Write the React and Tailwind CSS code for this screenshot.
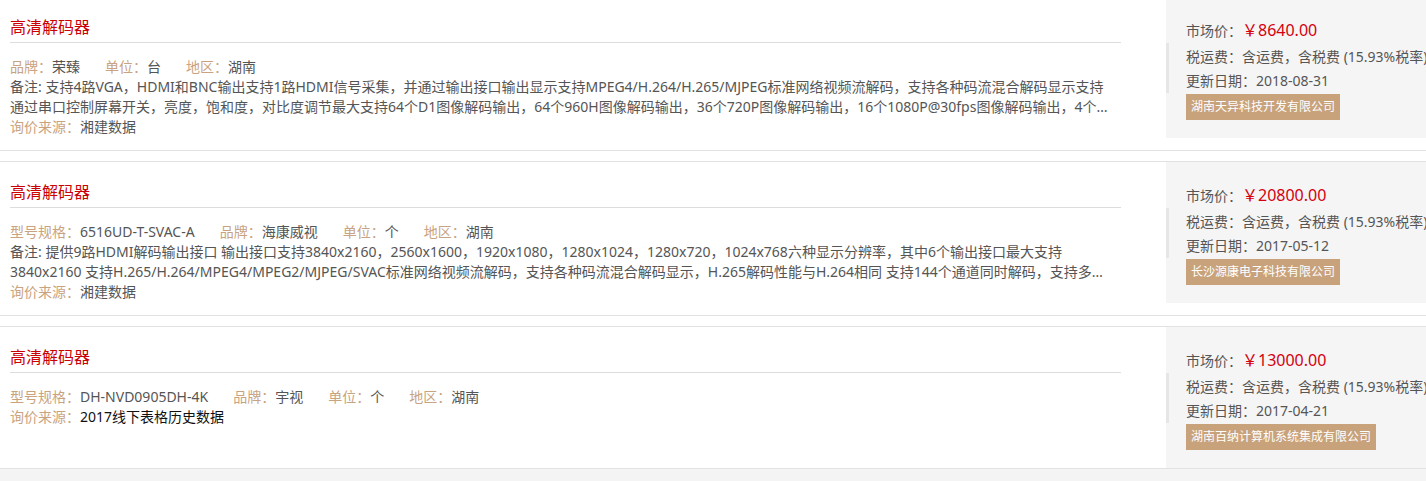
const items = [
  {
    title: "高清解码器",
    fields: [
      ["品牌", "荣臻"],
      ["单位", "台"],
      ["地区", "湖南"],
    ],
    note: "备注: 支持4路VGA，HDMI和BNC输出支持1路HDMI信号采集，并通过输出接口输出显示支持MPEG4/H.264/H.265/MJPEG标准网络视频流解码，支持各种码流混合解码显示支持通过串口控制屏幕开关，亮度，饱和度，对比度调节最大支持64个D1图像解码输出，64个960H图像解码输出，36个720P图像解码输出，16个1080P@30fps图像解码输出，4个4K图像解码输出，支持多画面分割显示",
    source: "湘建数据",
    price: "8640.00",
    date: "2018-08-31",
    company: "湖南天异科技开发有限公司",
  },
  {
    title: "高清解码器",
    fields: [
      ["型号规格", "6516UD-T-SVAC-A"],
      ["品牌", "海康威视"],
      ["单位", "个"],
      ["地区", "湖南"],
    ],
    note: "备注: 提供9路HDMI解码输出接口 输出接口支持3840x2160，2560x1600，1920x1080，1280x1024，1280x720，1024x768六种显示分辨率，其中6个输出接口最大支持3840x2160 支持H.265/H.264/MPEG4/MPEG2/MJPEG/SVAC标准网络视频流解码，支持各种码流混合解码显示，H.265解码性能与H.264相同 支持144个通道同时解码，支持多画面分割显示，支持大屏拼接",
    source: "湘建数据",
    price: "20800.00",
    date: "2017-05-12",
    company: "长沙源康电子科技有限公司",
  },
  {
    title: "高清解码器",
    fields: [
      ["型号规格", "DH-NVD0905DH-4K"],
      ["品牌", "宇视"],
      ["单位", "个"],
      ["地区", "湖南"],
    ],
    source: "2017线下表格历史数据",
    sourceDark: true,
    price: "13000.00",
    date: "2017-04-21",
    company: "湖南百纳计算机系统集成有限公司",
  },
];

function Item({ item }) {
  return (
    <div className="flex items-start border-y border-[#e2e2e2] mb-[10px] pl-[10px]">
      {/* 左侧: 名称和参数 */}
      <div className="w-[1111px] shrink-0 pt-[19px] pb-[13px]">
        <h3 className="text-[16px] leading-[22px] text-[#cc0000] pb-[4px] border-b border-[#dddddd]">
          {item.title}
        </h3>
        <div className="mt-[14px] text-[14px] leading-[20px] text-[#555555]">
          <div className="flex">
            {item.fields.map(([label, value]) => (
              <span key={label} className="mr-[25px] whitespace-nowrap">
                <span className="text-[#c9a37f]">{label}：</span>
                {value}
              </span>
            ))}
          </div>
          {item.note && <p className="line-clamp-2 pr-[10px]">{item.note}</p>}
          <div>
            <span className="text-[#c9a37f]">询价来源：</span>
            <span className={item.sourceDark ? "text-[#111111]" : ""}>{item.source}</span>
          </div>
        </div>
      </div>

      {/* 右侧: 价格信息 */}
      <div className="relative ml-[45px] w-[300px] shrink-0 h-[141px] bg-[#f5f5f5] pl-[20px] pt-[21px] text-[14px] text-[#555555] whitespace-nowrap">
        <div className="absolute left-0 top-[46px] h-[50px] w-[3px] bg-[#e6e6e6]" />
        <div className="leading-[24px]">
          市场价：<span className="text-[16px] text-[#d4000f]">￥{item.price}</span>
        </div>
        <div className="mt-[2px] leading-[24px]">税运费：含运费，含税费 (15.93%税率)</div>
        <div className="leading-[24px]">更新日期：{item.date}</div>
        <div className="mt-[1px] inline-block bg-[#c8a27b] px-[5px] text-[12px] leading-[26px] text-white">
          {item.company}
        </div>
      </div>
    </div>
  );
}

export default function App() {
  return (
    <div className="w-[1426px] h-[481px] overflow-hidden bg-white font-['Noto_Sans','Noto_Sans_CJK_SC',sans-serif]">
      <div className="-mt-[4px] w-[1600px]">
        {items.map((item, i) => (
          <Item key={i} item={item} />
        ))}
        <div className="-mt-[10px] h-[30px] bg-[#f4f4f4]" />
      </div>
    </div>
  );
}
